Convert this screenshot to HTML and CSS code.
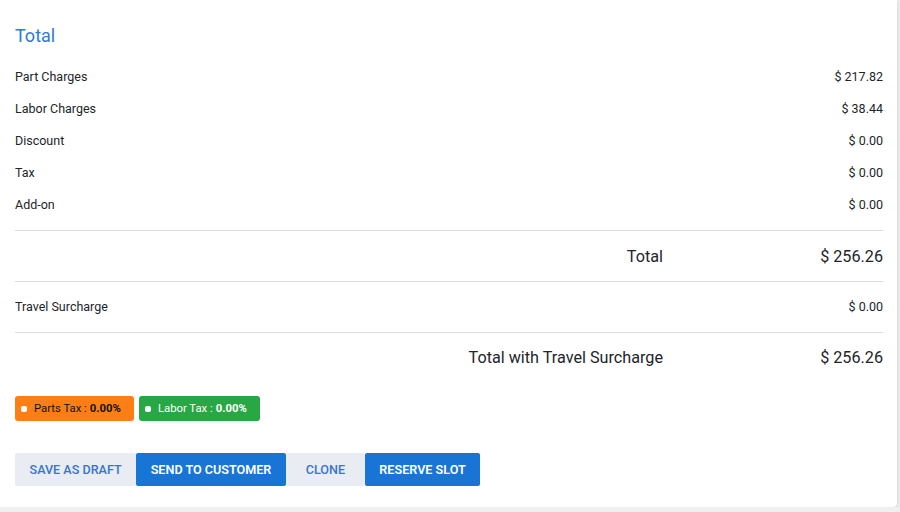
FILE: index.html
```html
<!DOCTYPE html>
<html lang="en">
  <head>
    <meta charset="UTF-8" />
    <meta name="viewport" content="width=device-width, initial-scale=1.0" />
    <title>Total</title>
    <link rel="stylesheet" href="styles.css">
  </head>
  <body>
    <div class="card">
      <h3 class="card-title">Total</h3>

      <div class="charges">
        <div class="row"><span>Part Charges</span><span>$ 217.82</span></div>
        <div class="row"><span>Labor Charges</span><span>$ 38.44</span></div>
        <div class="row"><span>Discount</span><span>$ 0.00</span></div>
        <div class="row"><span>Tax</span><span>$ 0.00</span></div>
        <div class="row"><span>Add-on</span><span>$ 0.00</span></div>
      </div>

      <div class="total-row">
        <span class="total-label">Total</span>
        <span class="total-value">$ 256.26</span>
      </div>

      <div class="row travel"><span>Travel Surcharge</span><span>$ 0.00</span></div>

      <div class="total-row last">
        <span class="total-label">Total with Travel Surcharge</span>
        <span class="total-value">$ 256.26</span>
      </div>

      <div class="badges">
        <span class="badge badge-orange"><i class="dot"></i>Parts Tax : <b>0.00%</b></span>
        <span class="badge badge-green"><i class="dot"></i>Labor Tax : <b>0.00%</b></span>
      </div>

      <div class="actions">
        <button class="btn btn-light">Save as Draft</button>
        <button class="btn btn-primary">Send to Customer</button>
        <button class="btn btn-light">Clone</button>
        <button class="btn btn-primary">Reserve Slot</button>
      </div>
    </div>
  </body>
</html>
```

FILE: styles.css
```css
/* Rechnungsübersicht */
body {
    margin: 0;
    background-color: #efefef;
    font-family: Roboto, "Liberation Sans", sans-serif;
    color: #212529;
}

.card {
    width: 897px;
    box-sizing: border-box;
    background-color: #fff;
    padding: 24px 14px 21px 15px;
    border-radius: 0 0 4px 0;
    box-shadow: 0 1px 4px rgba(0, 0, 0, 0.15);
}

.card-title {
    margin: 0 0 12px;
    font-size: 18px;
    font-weight: 400;
    line-height: 24px;
    color: #2f7bd6;
}

.row {
    display: flex;
    justify-content: space-between;
    align-items: center;
    height: 32px;
    font-size: 12.5px;
}

.charges {
    padding-bottom: 10px;
    border-bottom: 1px solid #dcdcdc;
}

.total-row {
    display: flex;
    justify-content: flex-end;
    align-items: center;
    height: 50px;
    font-size: 16.2px;
    border-bottom: 1px solid #dcdcdc;
}

.total-row.last {
    border-bottom: none;
    height: 49px;
}

.total-value {
    width: 220px;
    text-align: right;
}

.travel {
    height: 49px;
    padding-bottom: 1px;
    border-bottom: 1px solid #dcdcdc;
}

.badges {
    display: flex;
    gap: 5px;
    margin-top: 14px;
}

.badge {
    display: inline-flex;
    align-items: center;
    height: 25px;
    padding: 0 13px 0 6px;
    border-radius: 3px;
    font-size: 11.3px;
    color: #111;
}

.badge b {
    margin-left: 3px;
}

.badge-orange {
    background-color: #fd7e14;
}

.badge-green {
    background-color: #28a745;
    color: #fff;
}

.dot {
    display: inline-block;
    width: 6px;
    height: 6px;
    margin-right: 7px;
    border-radius: 2px;
    background-color: #fff;
}

.actions {
    display: flex;
    margin-top: 32px;
}

.btn {
    min-width: 79px;
    height: 33px;
    padding: 0 14.5px;
    border: none;
    border-radius: 2px;
    font-family: inherit;
    font-size: 12.6px;
    font-weight: 600;
    text-transform: uppercase;
    cursor: pointer;
}

.btn-light {
    background-color: #e9ecf2;
    color: #3a74cc;
    font-weight: 500;
}

.btn-primary {
    background-color: #1875d6;
    color: #fff;
}
```
